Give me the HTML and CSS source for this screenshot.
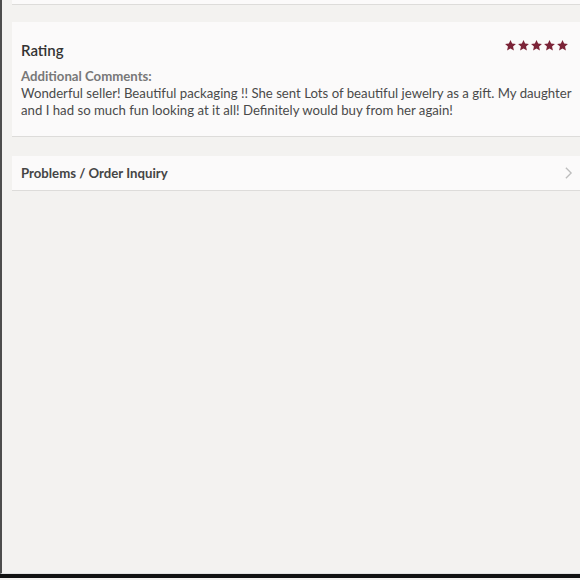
FILE: index.html
```html
<!DOCTYPE html>
<html lang="en">
<head>
  <meta charset="UTF-8" />
  <meta name="viewport" content="width=device-width, initial-scale=1.0"/>
  <title>Order Review</title>
  <link rel="stylesheet" href="styles.css">
</head>
<body>
  <div class="screen">
    <div class="card card-stub"></div>

    <div class="card review-card">
      <div class="review-head">
        <h2>Rating</h2>
        <div class="stars" aria-label="5 out of 5 stars">
          <svg viewBox="0 0 24 24"><path d="M12 2l3 6.5 7 .8-5.3 4.7 1.6 7L12 17.4 5.7 21l1.6-7L2 9.3l7-.8z"/></svg>
          <svg viewBox="0 0 24 24"><path d="M12 2l3 6.5 7 .8-5.3 4.7 1.6 7L12 17.4 5.7 21l1.6-7L2 9.3l7-.8z"/></svg>
          <svg viewBox="0 0 24 24"><path d="M12 2l3 6.5 7 .8-5.3 4.7 1.6 7L12 17.4 5.7 21l1.6-7L2 9.3l7-.8z"/></svg>
          <svg viewBox="0 0 24 24"><path d="M12 2l3 6.5 7 .8-5.3 4.7 1.6 7L12 17.4 5.7 21l1.6-7L2 9.3l7-.8z"/></svg>
          <svg viewBox="0 0 24 24"><path d="M12 2l3 6.5 7 .8-5.3 4.7 1.6 7L12 17.4 5.7 21l1.6-7L2 9.3l7-.8z"/></svg>
        </div>
      </div>
      <h3>Additional Comments:</h3>
      <p>Wonderful seller! Beautiful packaging !! She sent Lots of beautiful jewelry as a gift. My daughter and I had so much fun looking at it all! Definitely would buy from her again!</p>
    </div>

    <a class="card link-row" href="#">
      <span>Problems / Order Inquiry</span>
      <svg class="chevron" viewBox="0 0 10 16"><path d="M2 2l6 6-6 6"/></svg>
    </a>
  </div>
  <div class="bottom-bar"></div>
</body>
</html>
```

FILE: styles.css
```css
/* Reset & Base styles */
* {
  box-sizing: border-box;
  margin: 0;
  padding: 0;
}

body {
  font-family: Lato, 'Open Sans', sans-serif;
  background: #f3f2f0;
  color: #444;
  width: 580px;
  height: 580px;
  overflow: hidden;
}

.screen {
  height: 574px;
  border-left: 2px solid #4d4d4d;
  border-bottom: 1px solid #e2e2e2;
  padding-left: 10px;
}

.bottom-bar {
  height: 4px;
  background: #111;
}

.card {
  display: block;
  background: #fbfafa;
  border-bottom: 1px solid #dddcda;
}

.card-stub {
  height: 5px;
  margin-bottom: 17px;
}

.review-card {
  padding: 16px 3px 12px 9px;
  height: 115px;
  margin-bottom: 19px;
}

.review-head {
  display: flex;
  justify-content: space-between;
  align-items: flex-start;
}

.review-head h2 {
  font-size: 15px;
  font-weight: 600;
  color: #333;
  margin-top: 3px;
}

.stars {
  display: flex;
  margin-right: 8px;
  margin-top: 1px;
}

.stars svg {
  width: 13px;
  height: 13px;
  fill: #7b2337;
}

.review-card h3 {
  margin-top: 9px;
  font-size: 13.2px;
  font-weight: 700;
  color: #787878;
  line-height: 17px;
}

.review-card p {
  font-size: 13.2px;
  line-height: 17px;
  color: #4a4a4a;
}

.link-row {
  display: flex;
  justify-content: space-between;
  align-items: center;
  height: 35px;
  padding: 0 9px;
  text-decoration: none;
  font-size: 13.2px;
  font-weight: 700;
  color: #454545;
}

.chevron {
  width: 9px;
  height: 14px;
  fill: none;
  stroke: #bdbdbd;
  stroke-width: 1.5;
  margin-right: -2px;
}
```
